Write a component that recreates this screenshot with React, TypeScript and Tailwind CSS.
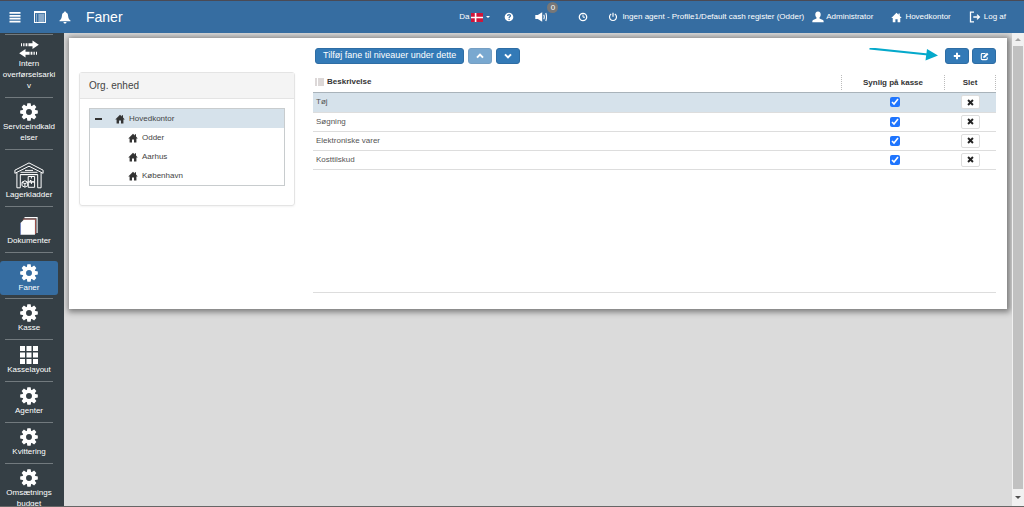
import { useState } from "react";
import type { ReactNode } from "react";
import clsx from "clsx";

type IconProps = { className?: string };

function GearIcon({ className }: IconProps) {
  return (
    <svg viewBox="0 0 20 20" className={className} fill="currentColor">
      {[0, 45, 90, 135].map((angle) => (
        <path
          key={angle}
          d="M8.2 0.2h3.6l.7 3.8v12l-.7 3.8H8.2L7.5 16v-2.2h5V6.2h-5V4z"
          transform={`rotate(${angle} 10 10)`}
        />
      ))}
      <path
        fillRule="evenodd"
        d="M10 2.8a7.2 7.2 0 1 0 0 14.4a7.2 7.2 0 1 0 0-14.4zM10 6.7a3.3 3.3 0 1 1 0 6.6a3.3 3.3 0 1 1 0-6.6z"
      />
    </svg>
  );
}

function TransferIcon({ className }: IconProps) {
  return (
    <svg viewBox="0 0 20 18" className={className} fill="currentColor">
      <path d="M2 3.3h1v3H2zM4.2 3.3h1.3v3H4.2zM6.6 3.3h1.8v3H6.6zM9.4 3.3h4.1V.6L19.8 4.8l-6.3 4.2V6.3H9.4z" />
      <path d="M18 11.7h-1v3h1zM15.8 11.7h-1.3v3h1.3zM13.4 11.7h-1.8v3h1.8zM10.6 11.7H6.5V9L.2 13.2l6.3 4.2v-2.7h4.1z" />
    </svg>
  );
}

function WarehouseIcon({ className }: IconProps) {
  return (
    <svg
      viewBox="0 0 30 27"
      className={className}
      fill="none"
      stroke="currentColor"
      strokeWidth="1"
    >
      <path d="M15 .9L.9 8.2v3.1L15 4.2l14.1 7.1V8.2z" />
      <path d="M2.9 10.5v15.3h3.4V12.6h17.4v13.2h3.4V10.5M6.5 10.3h17M11 8.4h8M6.5 12.6h17" />
      <path d="M14.2 14.5h6.4v5.4h-6.4zM14.2 19.9h6.4v5.4h-6.4zM17.4 14.5v2M17.4 20v2M15.8 18.5h1.6" />
      <path d="M8 20.2l2.9-1.4 2.9 1.4v3.5l-2.9 1.5L8 23.7zM8 20.2l2.9 1.5 2.9-1.5M10.9 21.7v3.5" />
    </svg>
  );
}

function DocumentsIcon({ className }: IconProps) {
  return (
    <svg viewBox="0 0 20 20" className={className}>
      <path d="M5 .7h14v17" fill="none" stroke="#fff" strokeWidth="1.2" />
      <path d="M3.2 2.4h14v16.5" fill="none" stroke="#c9584c" strokeWidth=".8" />
      <path d="M4.2 3h12.4v16.8H.8V6.4z" fill="#fff" />
      <path d="M.6 6.6V19.8" stroke="#7f96f5" strokeWidth=".6" />
    </svg>
  );
}

function GridIcon({ className }: IconProps) {
  return (
    <svg viewBox="0 0 18 18" className={className} fill="currentColor">
      {[0, 6.5, 13].map((y) =>
        [0, 6.5, 13].map((x) => (
          <rect key={`${x}-${y}`} x={x} y={y} width="5" height="5" />
        )),
      )}
    </svg>
  );
}

function HomeIcon({ className }: IconProps) {
  return (
    <svg viewBox="0 0 12 12" className={className} fill="currentColor">
      <path d="M6 .8L.3 6.5h1.6v4.8h2.9V7.8h2.4v3.5h2.9V6.5h1.6L9.6 4.3V1.6H8.2v1.3z" />
    </svg>
  );
}

function MenuIcon({ className }: IconProps) {
  return (
    <svg viewBox="0 0 12 12" className={className} fill="currentColor">
      <path d="M.5 1h11v1.8H.5zM.5 3.9h11v1.8H.5zM.5 6.8h11v1.8H.5zM.5 9.7h11v1.7H.5z" />
    </svg>
  );
}

function ListIcon({ className }: IconProps) {
  return (
    <svg viewBox="0 0 12 12" className={className}>
      <rect x=".5" y=".5" width="11" height="11" fill="none" stroke="#fff" />
      <path d="M.5 1.3h11" stroke="#fff" strokeWidth="1.6" />
      <path
        d="M2 4h1M2 6h1M2 8h1M2 10h1M4.4 4h6M4.4 6h6M4.4 8h6M4.4 10h6"
        stroke="#dbe8f4"
        strokeWidth="1.2"
      />
    </svg>
  );
}

function BellIcon({ className }: IconProps) {
  return (
    <svg viewBox="0 0 12 13" className={className} fill="currentColor">
      <path d="M6 .4c.7 0 1 .5 1 1.1 1.6.5 2 1.8 2.1 3.4.2 2.3 1 3.4 2.4 4.6v.8H.5v-.8C1.9 8.3 2.7 7.2 2.9 4.9 3 3.3 3.4 2 5 1.5 5 .9 5.3.4 6 .4zM4.5 11h3c0 1-.7 1.6-1.5 1.6S4.5 12 4.5 11z" />
    </svg>
  );
}

function HelpIcon({ className }: IconProps) {
  return (
    <svg viewBox="0 0 10 10" className={className}>
      <circle cx="5" cy="5" r="4.3" fill="#fff" />
      <path
        d="M3.6 3.9c0-1.7 2.9-1.7 2.9-.1 0 1-1.4 1-1.4 2.1M5.1 6.7v1.2"
        fill="none"
        stroke="#366da1"
        strokeWidth="1.2"
      />
    </svg>
  );
}

function SpeakerIcon({ className }: IconProps) {
  return (
    <svg viewBox="0 0 12 10" className={className} fill="currentColor">
      <path d="M.3 3h2.5L7.2.3v9.4L2.8 7H.3z" />
      <path
        d="M8.7 2.8c.7 1.3.7 3.1 0 4.4M10.8 1c.8 2.2.8 5.8 0 8"
        fill="none"
        stroke="currentColor"
        strokeWidth="1.1"
      />
    </svg>
  );
}

function ClockIcon({ className }: IconProps) {
  return (
    <svg
      viewBox="0 0 10 10"
      className={className}
      fill="none"
      stroke="currentColor"
      strokeWidth="1.3"
    >
      <circle cx="5" cy="5" r="3.7" />
      <path d="M5 2.5V5.2h2" strokeWidth="1" />
    </svg>
  );
}

function PowerIcon({ className }: IconProps) {
  return (
    <svg
      viewBox="0 0 10 10"
      className={className}
      fill="none"
      stroke="currentColor"
      strokeWidth="1.2"
    >
      <path d="M3.2 2a3.5 3.5 0 1 0 3.6 0M5 .8v4" />
    </svg>
  );
}

function UserIcon({ className }: IconProps) {
  return (
    <svg viewBox="0 0 12 12" className={className} fill="currentColor">
      <path d="M6 .6c1.9 0 2.8 1.4 2.7 3.2-.1 1.3-.6 2.2-1.2 2.8v.9l3.4 1.4c.5.3.8.9.8 2.3H.3c0-1.4.3-2 .8-2.3l3.4-1.4v-.9C3.9 6 3.4 5.1 3.3 3.8 3.2 2 4.1.6 6 .6z" />
    </svg>
  );
}

function LogoutIcon({ className }: IconProps) {
  return (
    <svg
      viewBox="0 0 12 12"
      className={className}
      fill="none"
      stroke="currentColor"
      strokeWidth="1.3"
    >
      <path d="M5 1.2H1.5v9.6H5M4.3 6h5.7M8 3.6L10.4 6 8 8.4" />
    </svg>
  );
}

function DanishFlag({ className }: IconProps) {
  return (
    <svg viewBox="0 0 12 9" className={className}>
      <path fill="#d0153a" d="M0 0h12v9H0z" />
      <path fill="#fff" d="M3.8 0h1.6v3.7H12v1.6H5.4V9H3.8V5.3H0V3.7h3.8z" />
    </svg>
  );
}

const menuItems = [
  { label: "Intern overførselsarkiv", icon: TransferIcon },
  { label: "Serviceindkaldelser", icon: GearIcon },
  { label: "Lagerkladder", icon: WarehouseIcon, kind: "wide" },
  { label: "Dokumenter", icon: DocumentsIcon, kind: "spaced" },
  { label: "Faner", icon: GearIcon, kind: "active" },
  { label: "Kasse", icon: GearIcon },
  { label: "Kasselayout", icon: GridIcon, kind: "grid" },
  { label: "Agenter", icon: GearIcon },
  { label: "Kvittering", icon: GearIcon },
  { label: "Omsætnings budget", icon: GearIcon },
];

const departments = ["Odder", "Aarhus", "København"];

const initialTabs = [
  { name: "Tøj", visible: true },
  { name: "Søgning", visible: true },
  { name: "Elektroniske varer", visible: true },
  { name: "Kosttilskud", visible: true },
];

function BlueButton({
  children,
  label,
  disabled,
}: {
  children: ReactNode;
  label?: string;
  disabled?: boolean;
}) {
  return (
    <button
      aria-label={label}
      disabled={disabled}
      className={clsx(
        "flex h-4 items-center justify-center rounded-[3px] border border-[#2e6da4] bg-[#337ab7] text-[9px] text-white",
        label ? "w-6" : "px-[7px]",
        disabled && "opacity-65",
      )}
    >
      {children}
    </button>
  );
}

function Header() {
  return (
    <header className="flex h-[33px] shrink-0 items-center justify-between border-t border-[#4a4a55] bg-[#366da1] pr-[18px] pl-[9px] text-[8px] text-white">
      <div className="flex items-center gap-[13px]">
        <button aria-label="Menu">
          <MenuIcon className="size-3" />
        </button>
        <button aria-label="Liste">
          <ListIcon className="size-3" />
        </button>
        <button aria-label="Notifikationer">
          <BellIcon className="h-[13px] w-3" />
        </button>
        <h1 className="ml-[2px] text-[14px]">Faner</h1>
      </div>
      <nav className="flex items-center gap-[18px] whitespace-nowrap">
        <div className="flex items-center">
          <button className="flex items-center">
            Da
            <DanishFlag className="ml-[2px] h-[9px] w-3" />
            <span className="ml-[3px] border-x-2 border-t-2 border-x-transparent border-t-white" />
          </button>
          <button aria-label="Hjælp" className="ml-[14px]">
            <HelpIcon className="size-[10px]" />
          </button>
          <button aria-label="Lyd" className="relative ml-[21px]">
            <SpeakerIcon className="h-[10px] w-3" />
            <span className="absolute -top-[10px] left-3 size-[11px] rounded-full bg-[#777] text-center leading-[11px]">
              0
            </span>
          </button>
          <button aria-label="Historik" className="ml-[31px]">
            <ClockIcon className="size-[10px]" />
          </button>
          <a href="#agent" className="ml-5 flex items-center gap-1">
            <PowerIcon className="size-[10px]" />
            Ingen agent - Profile1/Default cash register (Odder)
          </a>
          <a href="#bruger" className="ml-2 flex items-center gap-[2px]">
            <UserIcon className="size-3" />
            Administrator
          </a>
        </div>
        <a href="#hovedkontor" className="flex items-center gap-[3px]">
          <HomeIcon className="size-[11px]" />
          Hovedkontor
        </a>
        <a href="#logaf" className="flex items-center gap-[3px]">
          <LogoutIcon className="size-3" />
          Log af
        </a>
      </nav>
    </header>
  );
}

function Sidebar() {
  return (
    <aside className="w-16 shrink-0 overflow-hidden bg-[#353f45] text-[8px] leading-[11px] text-white">
      <ul className="w-[58px] pt-px">
        <li className="mx-[5px] h-px bg-[#727a7e]" />
        {menuItems.map(({ label, icon: Icon, kind }) => (
          <li key={label}>
            <a
              href={`#${label}`}
              className={clsx(
                "flex flex-col items-center px-[2px] text-center",
                kind === "active" &&
                  "mt-2 mb-[3px] rounded-[3px] bg-[#366da1] pt-[3px] pb-[2px]",
                kind === "wide" && "pt-3 pb-[6px]",
                kind === "spaced" && "pt-[10px] pb-[6px]",
                kind === "grid" && "pt-[6px] pb-[6px]",
                !kind && "pt-[5px] pb-[6px]",
              )}
            >
              <Icon
                className={clsx(
                  kind === "wide" ? "h-[27px] w-[30px]" : "h-[18px] w-5",
                )}
              />
              <span className="w-full break-words">{label}</span>
            </a>
            <div className="mx-[5px] h-px bg-[#727a7e]" />
          </li>
        ))}
      </ul>
    </aside>
  );
}

function OrgPanel() {
  return (
    <section className="mt-6 h-[134px] w-[216px] shrink-0 rounded-[3px] border border-[#e4e4e4] shadow-xs">
      <h2 className="border-b border-[#e4e4e4] bg-[#f4f4f4] px-[9px] text-[10px] leading-[25px] text-[#444]">
        Org. enhed
      </h2>
      <ul className="mx-[9px] mt-[9px] border border-[#c8ccce] text-[8px] leading-[19px] text-[#444]">
        <li>
          <div className="flex items-center bg-[#d6e2eb] pl-[5px]">
            <button
              aria-label="Fold sammen"
              className="h-[2px] w-[7px] bg-[#333]"
            />
            <HomeIcon className="ml-[13px] size-[10px] text-[#333]" />
            <span className="ml-1">Hovedkontor</span>
          </div>
          <ul>
            {departments.map((name) => (
              <li key={name} className="flex items-center pl-[38px]">
                <HomeIcon className="size-[10px] text-[#333]" />
                <span className="ml-1">{name}</span>
              </li>
            ))}
          </ul>
        </li>
      </ul>
    </section>
  );
}

function TabsTable() {
  const [tabs, setTabs] = useState(initialTabs);

  const toggleTab = (name: string) => {
    setTabs(
      tabs.map((t) => (t.name === name ? { ...t, visible: !t.visible } : t)),
    );
  };

  return (
    <div className="mt-[9px] h-[220px] border-b border-[#ddd]">
      <table className="w-full table-fixed border-collapse text-[8px] text-[#555]">
        <thead>
          <tr className="h-[19px] border-b border-[#a9b3ba] text-[#333]">
            <th className="text-left">
              <div className="flex items-center gap-[3px] pl-[2px]">
                <svg viewBox="0 0 9 8" className="h-2 w-[9px]">
                  <path
                    d="M0 1h2M3 1h6M0 3h2M3 3h6M0 5h2M3 5h6M0 7h2M3 7h6"
                    stroke="#b9b0b0"
                  />
                </svg>
                Beskrivelse
              </div>
            </th>
            <th className="w-[103px] p-0">
              <div className="border-l border-dotted border-[#bbb] leading-[15px]">
                Synlig på kasse
              </div>
            </th>
            <th className="w-[52px] p-0">
              <div className="border-x border-dotted border-[#bbb] leading-[15px]">
                Slet
              </div>
            </th>
          </tr>
        </thead>
        <tbody>
          {tabs.map((tab, index) => (
            <tr
              key={tab.name}
              className={clsx(
                "border-b border-[#ddd]",
                index === 0 ? "h-5 bg-[#d6e2eb]" : "h-[19px]",
              )}
            >
              <td className="py-0 pl-[3px]">{tab.name}</td>
              <td className="py-0 pl-1">
                <input
                  type="checkbox"
                  aria-label={`Synlig på kasse: ${tab.name}`}
                  checked={tab.visible}
                  onChange={() => toggleTab(tab.name)}
                  className="mx-auto block size-[10px] accent-[#1f75fe]"
                />
              </td>
              <td className="py-0">
                <button
                  aria-label={`Slet ${tab.name}`}
                  className="mx-auto flex h-[14px] w-[19px] items-center justify-center rounded-[2px] border border-[#ddd] bg-white text-[#222]"
                >
                  <svg viewBox="0 0 8 8" className="size-[7px]">
                    <path
                      d="M1.2 1.2l5.6 5.6M6.8 1.2L1.2 6.8"
                      stroke="currentColor"
                      strokeWidth="2.2"
                    />
                  </svg>
                </button>
              </td>
            </tr>
          ))}
        </tbody>
      </table>
    </div>
  );
}

function Toolbar() {
  return (
    <div className="flex h-4 items-center justify-between">
      <div className="ml-[2px] flex gap-1">
        <BlueButton>Tilføj fane til niveauer under dette</BlueButton>
        <BlueButton label="Flyt op" disabled>
          <svg viewBox="0 0 8 6" className="h-[6px] w-2">
            <path d="M1 4.6l3-3 3 3" fill="none" stroke="#fff" strokeWidth="2" />
          </svg>
        </BlueButton>
        <BlueButton label="Flyt ned">
          <svg viewBox="0 0 8 6" className="h-[6px] w-2">
            <path d="M1 1.4l3 3 3-3" fill="none" stroke="#fff" strokeWidth="2" />
          </svg>
        </BlueButton>
      </div>
      <div className="flex gap-[3px]">
        <svg viewBox="0 0 70 16" className="mr-1 h-4 w-[70px]">
          <path d="M1.5.4L60 6.4" stroke="#05a9cb" strokeWidth="2" />
          <path d="M59 1L70 7.6 57.5 12.4z" fill="#05a9cb" />
        </svg>
        <BlueButton label="Tilføj">
          <svg viewBox="0 0 8 8" className="size-2">
            <path d="M4 .8v6.4M.8 4h6.4" stroke="#fff" strokeWidth="2" />
          </svg>
        </BlueButton>
        <BlueButton label="Rediger">
          <svg viewBox="0 0 9 9" className="size-[9px]">
            <path
              d="M5.5 1.5H2.2q-.9 0-.9.9v4.3q0 .9.9.9h4.1q.9 0 .9-.9V5.3"
              fill="none"
              stroke="#fff"
              strokeWidth="1.1"
            />
            <path d="M3.4 4.3L7 .7l1.5 1.5-3.6 3.6-1.7.3z" fill="#fff" />
          </svg>
        </BlueButton>
      </div>
    </div>
  );
}

function Scrollbar() {
  return (
    <div className="flex w-3 shrink-0 flex-col items-center bg-[#f1f1f1]">
      <div className="flex h-[13px] items-center">
        <span className="border-x-[3px] border-b-[3px] border-x-transparent border-b-[#a3a3a3]" />
      </div>
      <div className="w-[10px] flex-1 bg-[#c1c1c1]" />
      <div className="flex h-[17px] items-center">
        <span className="border-x-[3px] border-t-[3px] border-x-transparent border-t-[#505050]" />
      </div>
    </div>
  );
}

export default function App() {
  return (
    <div className="flex h-screen flex-col overflow-hidden border-b border-[#666] bg-[#dbdbdb] font-['Liberation_Sans',Arial,sans-serif]">
      <Header />
      <div className="flex min-h-0 flex-1">
        <Sidebar />
        <main className="min-w-0 flex-1 overflow-hidden p-[5px]">
          <div className="flex items-start gap-[18px] bg-white pt-[10px] pr-[11px] pb-4 pl-[10px] shadow-[1px_1px_6px_2px_rgba(0,0,0,0.45)]">
            <OrgPanel />
            <div className="min-w-0 flex-1">
              <Toolbar />
              <TabsTable />
            </div>
          </div>
        </main>
        <Scrollbar />
      </div>
    </div>
  );
}
